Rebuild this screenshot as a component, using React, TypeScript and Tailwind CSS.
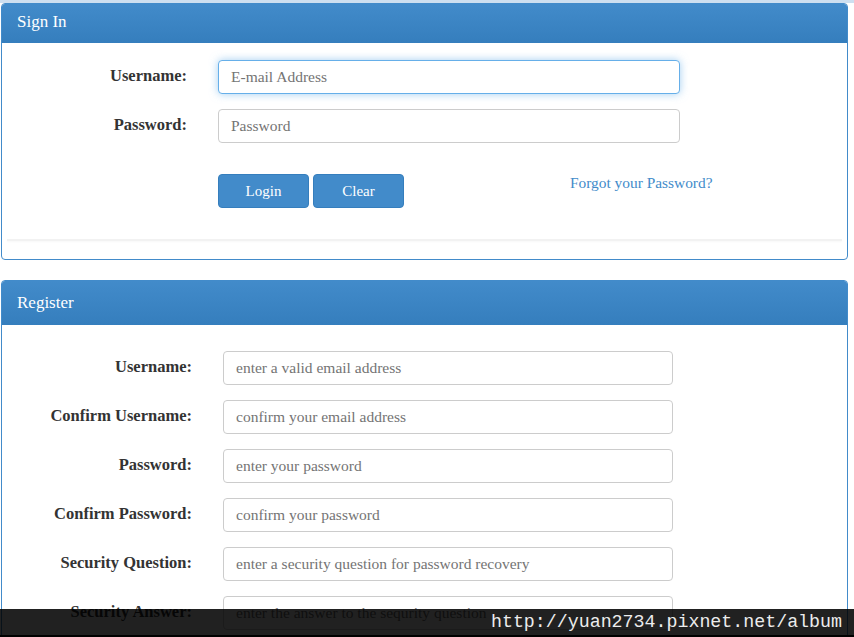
import React from "react";

const serif = "font-['Liberation_Serif','Times_New_Roman',serif]";

function Field({ label, placeholder, labelW, inputW, focused }: { label: string; placeholder: string; labelW: string; inputW: string; focused?: boolean }) {
  return (
    <div className="flex items-center gap-[31px]">
      <label className={`${labelW} -mt-px text-right text-[16.5px] font-bold leading-none text-[#333]`}>{label}</label>
      <input
        placeholder={placeholder}
        className={`${inputW} h-[34px] rounded-[4px] border bg-white px-[12px] text-[15.5px] text-[#555] placeholder-[#747474] outline-none ${
          focused ? "border-[#66afe9] shadow-[0_0_8px_rgba(102,175,233,0.6)]" : "border-[#ccc]"
        }`}
      />
    </div>
  );
}

export default function App() {
  return (
    <div className={`relative h-[637px] w-[854px] overflow-hidden bg-white ${serif}`}>
      <div className="h-[3px] bg-[#cddff0]" />

      {/* Sign In panel */}
      <div className="ml-px w-[847px] overflow-hidden rounded-[4px] border border-[#428bca]">
        <div className="flex h-[39px] items-center bg-gradient-to-b from-[#428bca] to-[#357ebd] pb-[3px] pl-[15px] text-[17px] text-white">
          Sign In
        </div>
        <div className="pt-[17px]">
          <div className="flex flex-col gap-[15px]">
            <Field label="Username:" placeholder="E-mail Address" labelW="w-[185px]" inputW="w-[462px]" focused />
            <Field label="Password:" placeholder="Password" labelW="w-[185px]" inputW="w-[462px]" />
          </div>
          <div className="ml-[216px] mt-[31px] flex items-start">
            <button className="h-[34px] w-[91px] rounded-[4px] border border-[#357ebd] bg-[#428bca] text-[15px] text-white">Login</button>
            <button className="ml-[4px] h-[34px] w-[91px] rounded-[4px] border border-[#357ebd] bg-[#428bca] text-[15px] text-white">Clear</button>
            <a className="-mt-[3px] ml-[166px] text-[15.4px] text-[#428bca]">Forgot your Password?</a>
          </div>
          <div className="mx-[5px] mt-[31px] h-[2px] bg-[#f2f2f2] shadow-[0_1px_2px_rgba(0,0,0,0.03)]" />
          <div className="h-[18px]" />
        </div>
      </div>

      {/* Register panel */}
      <div className="ml-px mt-[20px] w-[847px] overflow-hidden rounded-t-[4px] border border-[#428bca]">
        <div className="flex h-[44px] items-center bg-gradient-to-b from-[#428bca] to-[#357ebd] pb-[1px] pl-[15px] text-[17px] text-white">
          Register
        </div>
        <div className="flex flex-col gap-[15px] pb-[40px] pt-[26px]">
          <Field label="Username:" placeholder="enter a valid email address" labelW="w-[190px]" inputW="w-[450px]" />
          <Field label="Confirm Username:" placeholder="confirm your email address" labelW="w-[190px]" inputW="w-[450px]" />
          <Field label="Password:" placeholder="enter your password" labelW="w-[190px]" inputW="w-[450px]" />
          <Field label="Confirm Password:" placeholder="confirm your password" labelW="w-[190px]" inputW="w-[450px]" />
          <Field label="Security Question:" placeholder="enter a security question for password recovery" labelW="w-[190px]" inputW="w-[450px]" />
          <Field label="Security Answer:" placeholder="enter the answer to the sequrity question" labelW="w-[190px]" inputW="w-[450px]" />
        </div>
      </div>

      {/* watermark */}
      <div className="absolute left-0 right-0 top-[609px] flex h-[28px] items-center justify-end border-b-2 border-black bg-black/[0.87] pr-[12px] font-['Liberation_Mono','Courier_New',monospace] text-[18.3px] leading-none text-[#ececec]">
        http://yuan2734.pixnet.net/album
      </div>
    </div>
  );
}
